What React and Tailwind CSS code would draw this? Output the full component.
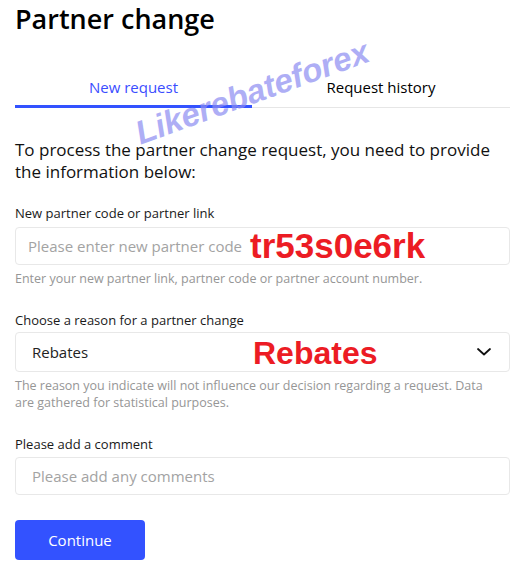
import { useState } from "react";

const FONT = "font-['Open_Sans',sans-serif]";

function Chevron() {
  return (
    <svg width="16" height="10" viewBox="0 0 16 10" fill="none">
      <path d="M2 2l6 5.5L14 2" stroke="#111" strokeWidth="1.8" strokeLinecap="round" strokeLinejoin="round" />
    </svg>
  );
}

export default function App() {
  const [tab, setTab] = useState("new");
  const [code, setCode] = useState("");
  const [comment, setComment] = useState("");

  return (
    <div className={`relative min-h-[569px] bg-white pl-[15px] pr-[17px] text-[#111] ${FONT}`}>
      <h1 className="pt-[2px] text-[27px] font-semibold leading-[34px] text-black">Partner change</h1>

      {/* tabs */}
      <div className="mt-[34px] flex border-b border-[#e6e6e6]">
        <button
          onClick={() => setTab("new")}
          className={`-mb-px h-[38px] w-[237px] border-b-[3px] text-[15px] ${
            tab === "new" ? "border-[#3352ff] text-[#3a4dff]" : "border-transparent text-black"
          }`}
        >
          New request
        </button>
        <button
          onClick={() => setTab("history")}
          className={`-mb-px h-[38px] flex-1 border-b-[3px] text-[15px] ${
            tab === "history" ? "border-[#3352ff] text-[#3a4dff]" : "border-transparent text-black"
          }`}
        >
          Request history
        </button>
      </div>

      <p className="mt-[31px] text-[17px] leading-[22px] text-[#111]">
        To process the partner change request, you need to provide the information below:
      </p>

      <label className="mt-[21px] block text-[13px] leading-[18px] text-[#1a1a1a]">New partner code or partner link</label>
      <div className="relative mt-[5px]">
        <input
          value={code}
          onChange={(e) => setCode(e.target.value)}
          placeholder="Please enter new partner code"
          className="h-[38px] w-full rounded-[4px] border border-[#e8e8e8] px-[12px] text-[15px] outline-none placeholder:text-[#a3a3a3]"
        />
        <span className="pointer-events-none absolute left-[235px] top-[-1px] font-['Liberation_Sans',Arial,sans-serif] text-[35px] font-bold leading-[40px] text-[#ec1c24]">
          tr53s0e6rk
        </span>
      </div>
      <p className="mt-[5px] text-[12.5px] leading-[17px] text-[#969696]">
        Enter your new partner link, partner code or partner account number.
      </p>

      <label className="mt-[24px] block text-[13px] leading-[18px] text-[#1a1a1a]">Choose a reason for a partner change</label>
      <div className="relative mt-[3px] flex h-[40px] items-center justify-between rounded-[4px] border border-[#e8e8e8] pl-[16px] pr-[17px]">
        <span className="text-[15px] text-[#222]">Rebates</span>
        <Chevron />
        <span className="pointer-events-none absolute left-[237px] top-0 font-['Liberation_Sans',Arial,sans-serif] text-[32px] font-bold leading-[40px] text-[#ec1c24]">
          Rebates
        </span>
      </div>
      <p className="mt-[5px] max-w-[484px] text-[12.5px] leading-[17px] text-[#969696]">
        The reason you indicate will not influence our decision regarding a request. Data are gathered for statistical purposes.
      </p>

      <label className="mt-[24px] block text-[13px] leading-[18px] text-[#1a1a1a]">Please add a comment</label>
      <input
        value={comment}
        onChange={(e) => setComment(e.target.value)}
        placeholder="Please add any comments"
        className="mt-[4px] h-[38px] w-full rounded-[4px] border border-[#e8e8e8] px-[16px] text-[15px] outline-none placeholder:text-[#a3a3a3]"
      />

      <button className="mt-[25px] h-[40px] w-[130px] rounded-[4px] bg-[#3352ff] text-[15px] text-white">Continue</button>

      {/* watermark */}
      <span className="pointer-events-none absolute left-[252px] top-[92px] -translate-x-1/2 -translate-y-1/2 -rotate-[20deg] whitespace-nowrap font-['Liberation_Sans',Arial,sans-serif] text-[33px] font-bold italic leading-none text-[#8c8cf2] opacity-70">
        Likerebateforex
      </span>
    </div>
  );
}
